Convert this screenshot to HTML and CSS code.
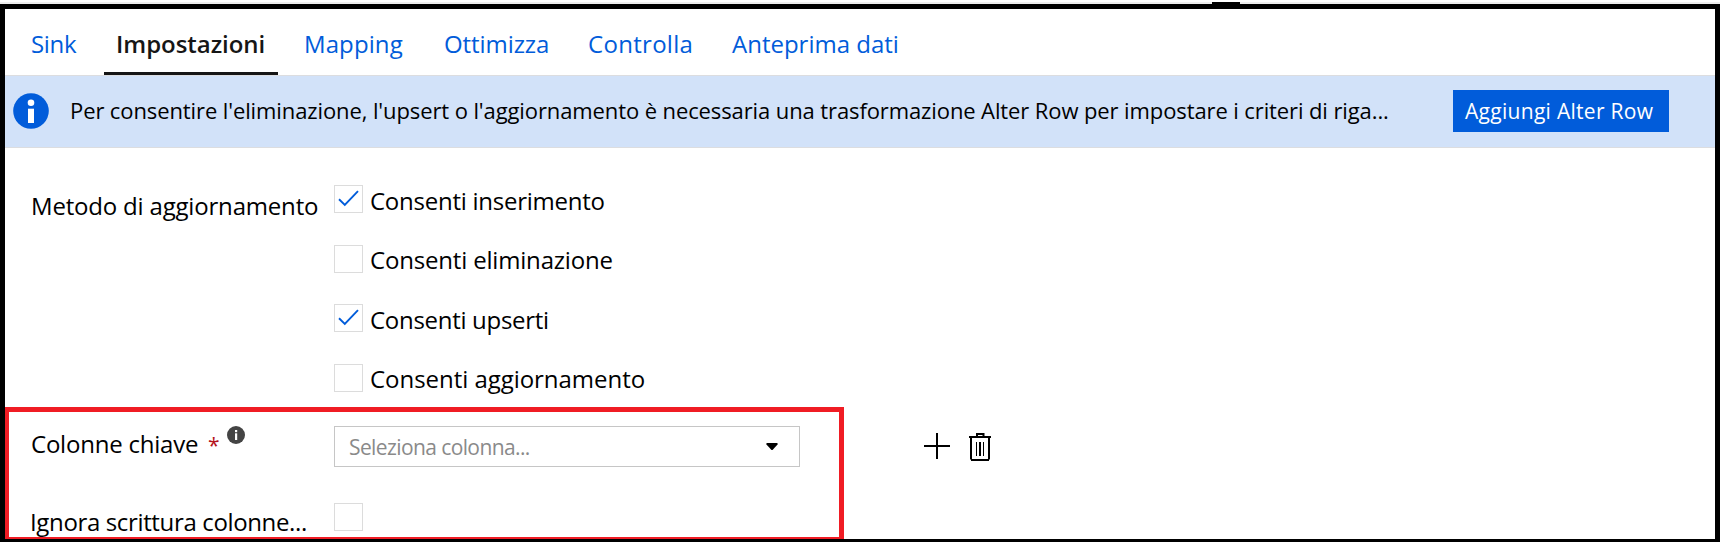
FILE: index.html
```html
<!DOCTYPE html>
<html lang="it">
<head>
<meta charset="utf-8">
<title>Impostazioni sink</title>
<link rel="stylesheet" href="styles.css">
</head>
<body>
<div class="page">
  <div class="splitter"><span class="splitter-grip"></span></div>
  <main class="panel">
    <nav class="tabs">
      <a class="tab tab-sink">Sink</a>
      <a class="tab tab-active">Impostazioni</a>
      <a class="tab tab-mapping">Mapping</a>
      <a class="tab tab-ottimizza">Ottimizza</a>
      <a class="tab tab-controlla">Controlla</a>
      <a class="tab tab-anteprima">Anteprima dati</a>
    </nav>
    <section class="banner">
      <svg class="banner-icon" viewBox="0 0 36 36">
        <circle cx="18" cy="18" r="17.8" fill="#015cda"/>
        <circle cx="18" cy="9.7" r="3.3" fill="#fff"/>
        <rect x="15" y="15.7" width="6" height="14.3" fill="#fff"/>
      </svg>
      <p class="banner-text">Per consentire l'eliminazione, l'upsert o l'aggiornamento è necessaria una trasformazione Alter Row per impostare i criteri di riga...</p>
      <button class="banner-button">Aggiungi Alter Row</button>
    </section>
    <section class="form">
      <div class="row row-method">
        <div class="label label-method">Metodo di aggiornamento</div>
        <div class="options">
          <label class="option opt-insert"><span class="box"><svg class="check" viewBox="0 0 27 26"><path d="M4 13.3 L9.8 19 L23 5.2"/></svg></span><span class="option-text">Consenti inserimento</span></label>
          <label class="option opt-delete"><span class="box"></span><span>Consenti eliminazione</span></label>
          <label class="option opt-upsert"><span class="box"><svg class="check" viewBox="0 0 27 26"><path d="M4 13.3 L9.8 19 L23 5.2"/></svg></span><span class="option-text">Consenti upserti</span></label>
          <label class="option opt-update"><span class="box"></span><span>Consenti aggiornamento</span></label>
        </div>
      </div>
      <div class="row row-keys">
        <div class="label label-keys">
          <span class="keys-text">Colonne chiave</span>
          <span class="required">*</span>
          <svg class="info" viewBox="0 0 18 18">
            <circle cx="9" cy="9" r="9" fill="#444"/>
            <rect x="8" y="4" width="2.2" height="2.2" fill="#fff"/>
            <rect x="8" y="7.3" width="2.2" height="6.7" fill="#fff"/>
          </svg>
        </div>
        <div class="select">
          <span class="placeholder">Seleziona colonna...</span>
          <svg class="caret" viewBox="0 0 12 7"><path d="M1 0H11L12 1L6.5 7H5.5L0 1Z"/></svg>
        </div>
        <div class="actions">
          <svg class="plus" viewBox="0 0 26 26"><path d="M0 13H26M13 0V26" stroke="#000" stroke-width="2"/></svg>
          <svg class="trash" viewBox="0 0 22 28">
            <path d="M0 4H22M2 4V26.5M20 4V26.5M2 27H20M8 4V1H14.5V4" fill="none" stroke="#000" stroke-width="2"/>
            <path d="M7.5 9V23M14.5 9V23" stroke="#000"/>
            <path d="M11 9V23" stroke="#000" stroke-width="2"/>
          </svg>
        </div>
      </div>
      <div class="row row-skip">
        <div class="label label-skip">Ignora scrittura colonne...</div>
        <span class="box"></span>
      </div>
    </section>
    <div class="highlight"></div>
  </main>
</div>
</body>
</html>
```
FILE: styles.css
```css
* { box-sizing: border-box; }
body { margin: 0; background: #fff; color: #000; font: 24px/30px "Open Sans", "Noto Sans", sans-serif; }
svg { display: block; flex: none; }
.page { display: flex; flex-direction: column; width: 1720px; height: 542px; overflow: hidden; }

.splitter { flex: none; height: 4px; padding-left: 1212px; background: linear-gradient(#fff 2px, #eee 2px); display: flex; align-items: flex-end; }
.splitter-grip { width: 28px; height: 2px; background: #000; }

.panel { position: relative; height: 538px; border: 5px solid #000; border-bottom-width: 3px; overflow: hidden; }

.tabs { display: grid; grid-template-columns: 86px 188px 140px 144px 144px auto; justify-items: start; height: 66px; padding-left: 13px; }
.tab { height: 66px; padding: 3px 12px 0; line-height: 63px; color: #015cda; white-space: nowrap; }
.tab-sink { padding-left: 13px; letter-spacing: -0.3px; }
.tab-active { width: 174px; font-weight: 600; letter-spacing: -0.04px; color: #161616; border-bottom: 3px solid #161616; }
.tab-mapping { letter-spacing: 0.1px; }
.tab-ottimizza { letter-spacing: -0.08px; }
.tab-controlla { letter-spacing: 0.3px; }

.banner { display: flex; align-items: flex-start; height: 73px; padding-left: 8px; background: #d2e2f9; border-top: 1px solid #dcdde0; border-bottom: 1px solid #dcdde0; }
.banner-icon { width: 36px; height: 36px; margin-top: 17px; }
.banner-text { flex: none; width: 1391px; margin: 0; padding-left: 21px; font-size: 22px; line-height: 69px; letter-spacing: -0.106px; white-space: nowrap; }
.banner-button { width: 216px; height: 42px; margin: 14px 0 0 13px; padding: 0 0 0 12px; border: 0; background: #015cda; color: #fff; font: 21px/42px "Open Sans", "Noto Sans", sans-serif; letter-spacing: 0.29px; text-align: left; white-space: nowrap; }

.form { padding: 37px 0 0 25px; }
.row { display: grid; grid-template-columns: 304px 466px auto; align-items: start; white-space: nowrap; }
.row-method { height: 241px; }
.row-keys { height: 77px; }
.label-method { padding: 6px 0 0 1px; letter-spacing: -0.187px; }

.options { display: grid; grid-template-rows: 60px 59px 60px 28px; }
.option { display: flex; align-items: flex-start; gap: 7px; }
.option-text { padding-top: 1px; }
.opt-insert { letter-spacing: -0.25px; }
.opt-delete { letter-spacing: -0.18px; }
.opt-upsert { letter-spacing: -0.296px; }
.opt-update { letter-spacing: -0.04px; }
.box { flex: none; width: 29px; height: 28px; border: 1px solid #dcdcdc; background: #fff; }
.check { width: 27px; height: 26px; }
.check path { fill: none; stroke: #015cda; stroke-width: 1.9; }

.label-keys { display: flex; align-items: flex-start; letter-spacing: -0.215px; }
.keys-text { width: 178px; padding: 3px 0 0 1px; }
.required { width: 19px; padding-top: 4px; font-size: 21px; color: #b5121b; }
.info { width: 18px; height: 18px; }
.select { display: flex; align-items: center; justify-content: space-between; height: 41px; padding: 0 21px 0 14px; border: 1px solid #c6c6c6; }
.placeholder { padding-top: 2px; font-size: 21px; line-height: 37px; letter-spacing: -0.6px; color: #8a8a8a; }
.caret { width: 12px; height: 7px; }
.actions { display: flex; gap: 19px; padding: 7px 0 0 124px; }
.plus { width: 26px; height: 26px; }
.trash { width: 22px; height: 28px; }
.label-skip { padding-top: 4px; letter-spacing: -0.355px; }

.highlight { position: absolute; left: 0; top: 398px; width: 839px; height: 132px; border: 5px solid #f01c24; border-left-width: 4px; border-bottom-width: 2px; }
```
